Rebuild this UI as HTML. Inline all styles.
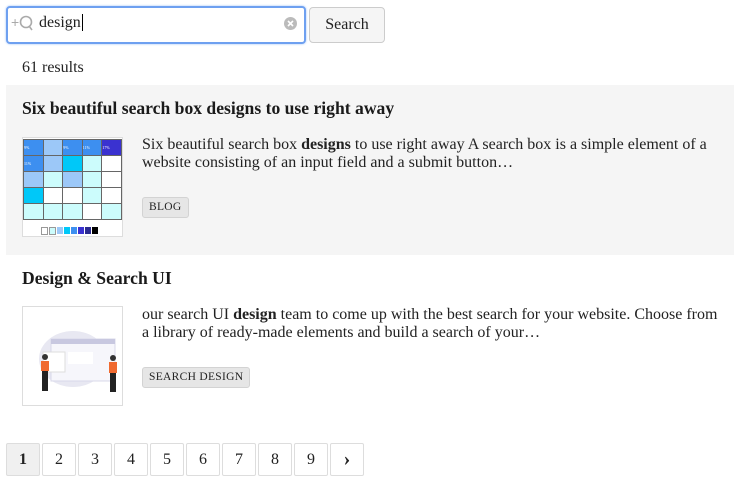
<!DOCTYPE html>
<html><head><style>
body{margin:0;width:735px;height:485px;background:#fff;font-family:"Liberation Serif",serif;color:#222;position:relative;overflow:hidden}
.a{position:absolute}
.inp{left:6px;top:6px;width:296px;height:34px;border:2px solid #6ea0f0;border-radius:4px;box-shadow:0 0 2px #9cc0f8}
.btn{left:309px;top:7px;width:74px;height:34px;border:1px solid #ccc;border-radius:4px;background:#f5f5f5;font-size:16px;text-align:center;line-height:34px;color:#222}
.t{font-weight:bold;font-size:17.6px;color:#1a1a1a}
.p{font-size:16px;line-height:18px;color:#222;width:578px}
.tag{font-size:11.5px;background:#e6e6e6;border:1px solid #d3d3d3;border-radius:3px;padding:0 6px;height:19px;line-height:19px;letter-spacing:.3px}
.pg{top:443px;width:32px;height:31px;border:1px solid #ddd;border-radius:2px;font-size:16px;text-align:center;line-height:31px;background:#fff}
.g{border-collapse:collapse}
.g td{width:18px;height:15px;border:1px solid #666;padding:0;font-size:4px;color:#fff;line-height:4px}
</style></head><body>
<div class="a inp"></div>
<div class="a" style="left:11px;top:14px;font-size:14px;color:#aaa;font-family:'Liberation Sans',sans-serif">+</div>
<svg class="a" style="left:19px;top:15px" width="16" height="18"><circle cx="7" cy="7" r="5.5" fill="none" stroke="#aaa" stroke-width="1.6"/><line x1="10" y1="11" x2="13" y2="15" stroke="#aaa" stroke-width="1.6"/></svg>
<div class="a" style="left:39px;top:14px;font-size:16px;color:#222">design<span style="border-left:1px solid #000;margin-left:1px"></span></div>
<svg class="a" style="left:284px;top:17px" width="13" height="13"><circle cx="6.5" cy="6.5" r="6.5" fill="#bbb"/><path d="M4 4L9 9M9 4L4 9" stroke="#fff" stroke-width="1.6"/></svg>
<div class="a btn">Search</div>
<div class="a" style="left:22px;top:59px;font-size:16px">61 results</div>
<div class="a" style="left:6px;top:85px;width:728px;height:170px;background:#f5f5f5"></div>
<div class="a t" style="left:22px;top:98px">Six beautiful search box designs to use right away</div>
<div class="a" style="left:22px;top:137px;width:99px;height:98px;border:1px solid #ddd;background:#fff">
<table class="g" style="margin:1px 0 0 0;width:99px">
<tr><td style="background:#3d8ff0">9%</td><td style="background:#9cc8f8"></td><td style="background:#3d8ff0">9%</td><td style="background:#3d8ff0">11%</td><td style="background:#3a32d0">17%</td></tr>
<tr><td style="background:#3d8ff0">11%</td><td style="background:#9cc8f8"></td><td style="background:#00c8f8"></td><td style="background:#ccfcfc"></td><td></td></tr>
<tr><td style="background:#9cc8f8"></td><td style="background:#ccfcfc"></td><td style="background:#9cc8f8"></td><td style="background:#ccfcfc"></td><td></td></tr>
<tr><td style="background:#00c8f8"></td><td></td><td></td><td style="background:#ccfcfc"></td><td></td></tr>
<tr><td style="background:#ccfcfc"></td><td style="background:#ccfcfc"></td><td style="background:#ccfcfc"></td><td></td><td style="background:#ccfcfc"></td></tr>
</table>
<div style="position:absolute;left:18px;top:89px;display:flex;gap:1px"><i style="width:5px;height:6px;border:1px solid #999"></i><i style="width:5px;height:6px;background:#ccfcfc;border:1px solid #999"></i><i style="width:6px;height:7px;background:#9cc8f8"></i><i style="width:6px;height:7px;background:#00c8f8"></i><i style="width:6px;height:7px;background:#3d8ff0"></i><i style="width:6px;height:7px;background:#3a32d0"></i><i style="width:6px;height:7px;background:#2a2a90"></i><i style="width:6px;height:7px;background:#000"></i></div>
</div>
<div class="a p" style="left:142px;top:136px">Six beautiful search box <b>designs</b> to use right away A search box is a simple element of a website consisting of an input field and a submit button…</div>
<div class="a tag" style="left:142px;top:197px">BLOG</div>
<div class="a t" style="left:22px;top:268px">Design &amp; Search UI</div>
<div class="a" style="left:22px;top:306px;width:99px;height:98px;border:1px solid #ddd;background:#fff">
<svg width="99" height="98"><ellipse cx="50" cy="52" rx="34" ry="28" fill="#e8e8f2"/><rect x="28" y="32" width="64" height="42" fill="#f6f6fb" stroke="#d8d8ea"/><rect x="28" y="32" width="64" height="5" fill="#c8c8e0"/><rect x="20" y="45" width="22" height="20" fill="#fff" stroke="#ddd"/><rect x="45" y="45" width="25" height="12" fill="#fff"/><circle cx="22" cy="50" r="3" fill="#333"/><rect x="18" y="54" width="8" height="10" fill="#f06a30"/><rect x="19" y="64" width="6" height="20" fill="#222"/><circle cx="90" cy="51" r="3" fill="#333"/><rect x="86" y="55" width="8" height="11" fill="#f06a30"/><rect x="87" y="66" width="6" height="19" fill="#222"/></svg>
</div>
<div class="a p" style="left:142px;top:306px">our search UI <b>design</b> team to come up with the best search for your website. Choose from a library of ready-made elements and build a search of your…</div>
<div class="a tag" style="left:142px;top:367px">SEARCH DESIGN</div>
<div class="a pg" style="left:6px;background:#f0f0f0;font-weight:bold">1</div>
<div class="a pg" style="left:42px">2</div>
<div class="a pg" style="left:78px">3</div>
<div class="a pg" style="left:114px">4</div>
<div class="a pg" style="left:150px">5</div>
<div class="a pg" style="left:186px">6</div>
<div class="a pg" style="left:222px">7</div>
<div class="a pg" style="left:258px">8</div>
<div class="a pg" style="left:294px">9</div>
<div class="a pg" style="left:330px;font-weight:bold;font-size:20px">›</div>
</body></html>
